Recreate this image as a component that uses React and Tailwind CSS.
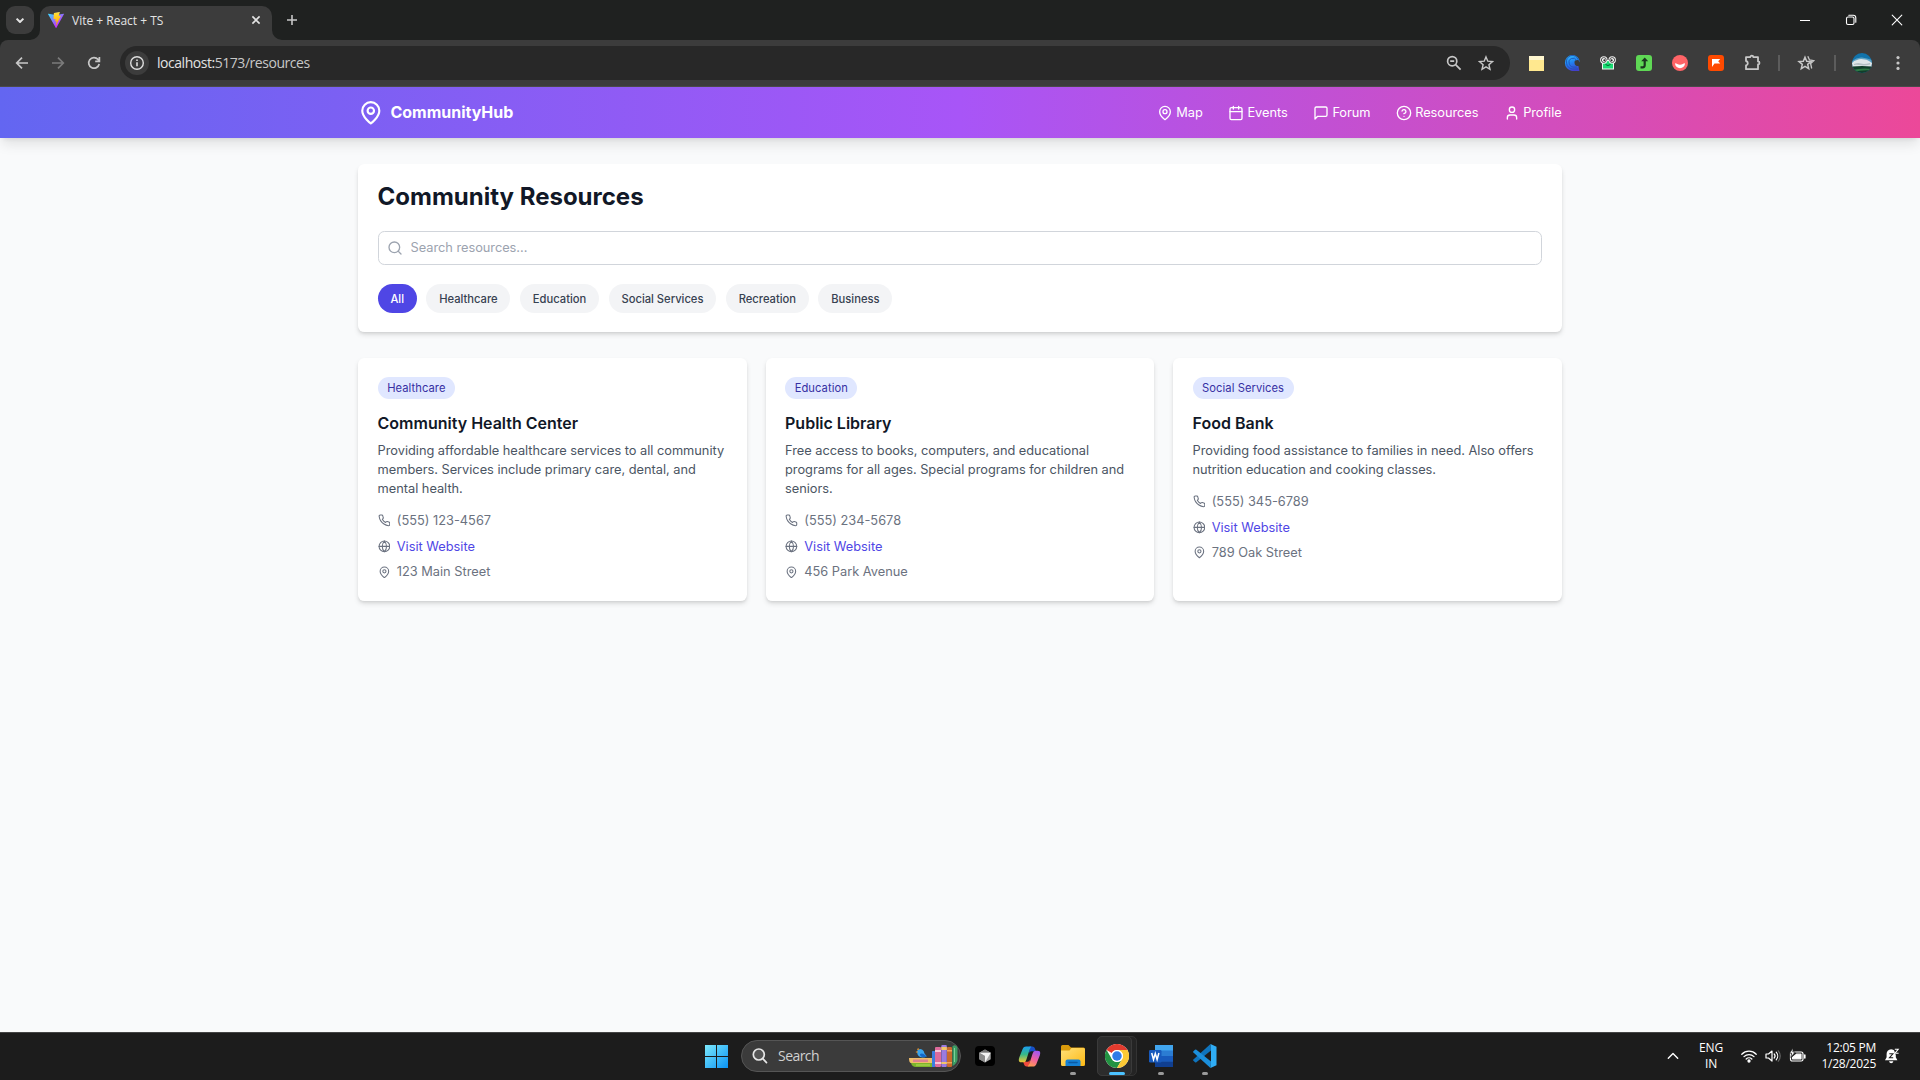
import React from "react";

const Svg = ({ className, children, sw = 2, vb = "0 0 24 24" }) => (
  <svg
    className={className}
    viewBox={vb}
    fill="none"
    stroke="currentColor"
    strokeWidth={sw}
    strokeLinecap="round"
    strokeLinejoin="round"
  >
    {children}
  </svg>
);

const MapPin = ({ className }) => (
  <Svg className={className}>
    <path d="M20 10c0 6-8 12-8 12s-8-6-8-12a8 8 0 0 1 16 0Z" />
    <circle cx="12" cy="10" r="3" />
  </Svg>
);
const Calendar = ({ className }) => (
  <Svg className={className}>
    <rect width="18" height="18" x="3" y="4" rx="2" />
    <path d="M8 2v4M16 2v4M3 10h18" />
  </Svg>
);
const Message = ({ className }) => (
  <Svg className={className}>
    <path d="M21 15a2 2 0 0 1-2 2H7l-4 4V5a2 2 0 0 1 2-2h14a2 2 0 0 1 2 2z" />
  </Svg>
);
const Help = ({ className }) => (
  <Svg className={className}>
    <circle cx="12" cy="12" r="10" />
    <path d="M9.09 9a3 3 0 0 1 5.83 1c0 2-3 3-3 3M12 17h.01" />
  </Svg>
);
const User = ({ className }) => (
  <Svg className={className}>
    <path d="M19 21v-2a4 4 0 0 0-4-4H9a4 4 0 0 0-4 4v2" />
    <circle cx="12" cy="7" r="4" />
  </Svg>
);
const SearchIcon = ({ className }) => (
  <Svg className={className}>
    <circle cx="11" cy="11" r="8" />
    <path d="m21 21-4.3-4.3" />
  </Svg>
);
const Phone = ({ className }) => (
  <Svg className={className}>
    <path d="M22 16.92v3a2 2 0 0 1-2.18 2 19.79 19.79 0 0 1-8.63-3.07 19.5 19.5 0 0 1-6-6 19.79 19.79 0 0 1-3.07-8.67A2 2 0 0 1 4.11 2h3a2 2 0 0 1 2 1.72 12.84 12.84 0 0 0 .7 2.81 2 2 0 0 1-.45 2.11L8.09 9.91a16 16 0 0 0 6 6l1.27-1.27a2 2 0 0 1 2.11-.45 12.84 12.84 0 0 0 2.81.7A2 2 0 0 1 22 16.92z" />
  </Svg>
);
const Globe = ({ className }) => (
  <Svg className={className}>
    <circle cx="12" cy="12" r="10" />
    <path d="M12 2a14.5 14.5 0 0 0 0 20 14.5 14.5 0 0 0 0-20M2 12h20" />
  </Svg>
);

/* ---------- Browser chrome ---------- */

const Vite = () => (
  <svg className="h-4 w-4" viewBox="0 0 256 257">
    <defs>
      <linearGradient id="va" x1="0%" x2="60%" y1="8%" y2="79%">
        <stop offset="0" stopColor="#41D1FF" />
        <stop offset="1" stopColor="#BD34FE" />
      </linearGradient>
      <linearGradient id="vb" x1="43%" x2="50%" y1="2%" y2="89%">
        <stop offset="0" stopColor="#FFEA83" />
        <stop offset=".08" stopColor="#FFDD35" />
        <stop offset="1" stopColor="#FFA800" />
      </linearGradient>
    </defs>
    <path fill="url(#va)" d="M255.153 37.938 134.897 252.976c-2.483 4.44-8.862 4.466-11.382.048L.875 37.958c-2.746-4.814 1.371-10.646 6.827-9.67l120.385 21.517a6.537 6.537 0 0 0 2.322-.004l117.867-21.483c5.438-.991 9.574 4.796 6.877 9.62Z" />
    <path fill="url(#vb)" d="M185.432.063 96.44 17.501a3.268 3.268 0 0 0-2.634 3.014l-5.474 92.456a3.268 3.268 0 0 0 3.997 3.378l24.777-5.718c2.318-.535 4.413 1.507 3.936 3.838l-7.361 36.047c-.495 2.426 1.782 4.5 4.151 3.78l15.304-4.649c2.372-.72 4.652 1.36 4.15 3.788l-11.698 56.621c-.732 3.542 3.979 5.473 5.943 2.437l1.313-2.028 72.516-144.72c1.215-2.423-.88-5.186-3.54-4.672l-25.505 4.922c-2.396.462-4.435-1.77-3.759-4.114l16.646-57.705c.677-2.35-1.37-4.583-3.769-4.113Z" />
  </svg>
);

const TabStrip = () => (
  <div className="flex h-10 w-full items-start bg-[#1f2120] pl-1.5">
    <div className="mt-1.5 flex h-7 w-7 items-center justify-center rounded-[9px] bg-[#3c3c3c] text-[#e3e3e3]">
      <Svg className="h-4 w-4" sw={2} vb="0 0 16 16">
        <path d="M4.6 6.6 8 10l3.4-3.4" strokeLinecap="butt" />
      </Svg>
    </div>
    <div className="relative ml-1.5 mt-1.5 flex h-[34px] w-[232px] items-start rounded-t-[10px] bg-[#3c3c3c] pl-2 pt-1.5">
      <svg className="absolute -left-2.5 bottom-0 h-2.5 w-2.5" viewBox="0 0 10 10">
        <path d="M10 0v10H0A10 10 0 0 0 10 0Z" fill="#3c3c3c" />
      </svg>
      <svg className="absolute -right-2.5 bottom-0 h-2.5 w-2.5" viewBox="0 0 10 10">
        <path d="M0 0v10h10A10 10 0 0 1 0 0Z" fill="#3c3c3c" />
      </svg>
      <Vite />
      <span className="ml-2 mt-px text-[12px] leading-4 text-[#e3e3e3]">Vite + React + TS</span>
      <Svg className="ml-auto mr-2 h-4 w-4 text-[#e3e3e3]" sw={1.6} vb="0 0 16 16">
        <path d="m4.4 4.4 7.2 7.2M11.6 4.4l-7.2 7.2" strokeLinecap="butt" />
      </Svg>
    </div>
    <Svg className="ml-3 mt-3 h-4 w-4 text-[#c7c7c7]" sw={1.6} vb="0 0 16 16">
      <path d="M8 3v10M3 8h10" strokeLinecap="butt" />
    </Svg>
    <div className="ml-auto flex h-10 text-white">
      <div className="flex w-[46px] items-center justify-center">
        <div className="mt-px h-px w-2.5 bg-white" />
      </div>
      <div className="flex w-[46px] items-center justify-center">
        <Svg className="h-3 w-3" sw={1.1} vb="0 0 12 12">
          <rect x="1.5" y="3" width="7.5" height="7.5" rx="1.5" />
          <path d="M3.8 1.2h4.4a2.6 2.6 0 0 1 2.6 2.6v4.4" />
        </Svg>
      </div>
      <div className="flex w-[46px] items-center justify-center">
        <Svg className="h-3 w-3" sw={1.1} vb="0 0 12 12">
          <path d="m1.2 1.2 9.6 9.6M10.8 1.2l-9.6 9.6" />
        </Svg>
      </div>
    </div>
  </div>
);

const Cell = ({ children }) => <div className="flex w-9 items-center justify-center">{children}</div>;

const Extensions = () => (
  <>
    <Cell>
      <div className="h-[15px] w-[15px] border-t-4 border-[#fff7cf] bg-[#ffe88f]" />
    </Cell>
    <Cell>
      <svg className="h-4 w-4" viewBox="0 0 16 16">
        <defs>
          <linearGradient id="wv" x1=".2" y1="0" x2=".5" y2="1">
            <stop offset="0" stopColor="#35bdf8" />
            <stop offset=".5" stopColor="#2183f2" />
            <stop offset="1" stopColor="#4340cc" />
          </linearGradient>
        </defs>
        <path d="M8 0a8 8 0 0 1 8 7.2c-2-1-4.2-.6-4.6.9-.4 1.4.8 2.600 3 2.900l1 4.900H8A8 8 0 0 1 8 0Z" fill="url(#wv)" />
        <path d="M10.500 8A2 2 0 0 1 15.800 7.200Q16 9.500 14.400 11q-3.400.5-3.900-3Z" fill="#3c3c3c" />
        <path d="M14.300 4.800A6 6 0 0 0 2.600 8.200c.2 3 2.600 5.600 6 5.800h5.600M12.600 5.300A4 4 0 0 0 5.200 8.200c.2 2 1.800 3.800 4.200 3.900h3.400" fill="none" stroke="#1c55b8" strokeWidth=".9" />
      </svg>
    </Cell>
    <Cell>
      <svg className="h-4 w-4" viewBox="0 0 16 16">
        <path d="M2 5h12v9.500H2z" fill="#eaf7ee" />
        <path d="M3 6h10v7.500H3z" fill="#18dc72" />
        <circle cx="3.8" cy="5" r="3.7" fill="#f2f2f2" />
        <circle cx="12.2" cy="5" r="3.7" fill="#f2f2f2" />
        <circle cx="3.8" cy="5" r="2.4" fill="#fff" stroke="#3a3a3a" strokeWidth=".9" />
        <circle cx="12.2" cy="5" r="2.4" fill="#fff" stroke="#3a3a3a" strokeWidth=".9" />
        <circle cx="4.3" cy="5.2" r="1" fill="#222" />
        <circle cx="11.7" cy="5.2" r="1" fill="#222" />
        <path d="M5.5 9.5q2.5 2 5 0" fill="none" stroke="#075c30" strokeWidth="1" />
      </svg>
    </Cell>
    <Cell>
      <svg className="h-4 w-4" viewBox="0 0 16 16">
        <rect width="16" height="16" rx="3" fill="#5fd855" />
        <path d="M4.500 12.300h2.200q2 0 2-2V5" fill="none" stroke="#1d3420" strokeWidth="2.200" />
        <path d="M5.200 6.200 8.700 2.400l3.500 3.800z" fill="#1d3420" />
      </svg>
    </Cell>
    <Cell>
      <svg className="h-4 w-4" viewBox="0 0 16 16">
        <circle cx="8" cy="8" r="8" fill="#ff6467" />
        <path d="M3 8.200q1.500 0 2.200.7 2.800 1.500 5.600 0 .7-.7 2.200-.7a5 5 0 0 1-10 0Z" fill="#fff" />
      </svg>
    </Cell>
    <Cell>
      <svg className="h-4 w-4" viewBox="0 0 16 16">
        <rect width="16" height="16" rx="3" fill="#ff4a00" />
        <path d="M4 4h8.200l-2 2.200 2 2.300H6.500L4 12z" fill="#fff" />
      </svg>
    </Cell>
    <Cell>
      <Svg className="h-[18px] w-[18px] text-[#c7c7c7]" sw={1.8} vb="0 0 18 18">
        <path d="M3 3.100h4.300a1.500 1.500 0 0 1 3 0h4.700v4.300a1.500 1.500 0 0 1 0 3v4.800H3v-3.700a2.300 2.300 0 0 0 0-4.500Z" />
      </Svg>
    </Cell>
  </>
);

const Toolbar = () => (
  <div className="w-full bg-[#1f2120]">
    <div className="flex h-[47px] w-full items-stretch rounded-t-[8px] border-b border-[#4a4a4a] bg-[#3c3c3c] pl-1 text-[#c7c7c7]">
      <Cell>
        <Svg className="h-4 w-4" sw={1.7} vb="0 0 16 16">
          <path d="M14 8H3M8 2.700 2.700 8 8 13.300" strokeLinecap="butt" strokeLinejoin="miter" />
        </Svg>
      </Cell>
      <Cell>
        <Svg className="h-4 w-4 text-[#7b7b7b]" sw={1.7} vb="0 0 16 16">
          <path d="M2 8h11M8 2.700 13.300 8 8 13.300" strokeLinecap="butt" strokeLinejoin="miter" />
        </Svg>
      </Cell>
      <Cell>
        <Svg className="h-4 w-4" sw={1.7} vb="0 0 16 16">
          <path d="M13.200 9A5.300 5.300 0 1 1 12 4.400l1.300 1.400M13.400 2v4.300H9.200" strokeLinecap="butt" strokeLinejoin="miter" />
        </Svg>
      </Cell>
      <div className="ml-2 mt-1.5 flex h-[34px] w-[1390px] items-center rounded-full bg-[#282828] pl-[5px] pr-2">
        <div className="flex h-6 w-6 items-center justify-center rounded-full bg-[#3c3c3c] text-[#dedede]">
          <Svg className="h-4 w-4" sw={1.4} vb="0 0 16 16">
            <circle cx="8" cy="8" r="6.3" />
            <path d="M8 7.200v4M8 4.600v1.500" strokeLinecap="butt" strokeWidth="1.6" />
          </Svg>
        </div>
        <span className="ml-2 text-[14px] leading-5 tracking-[-0.46px] text-[#e3e3e3]">
          localhost:<span className="text-[#c7c7c7]">5173/resources</span>
        </span>
        <div className="ml-auto flex">
          <div className="flex w-8 justify-center">
            <Svg className="h-4 w-4" sw={1.7} vb="0 0 16 16">
              <circle cx="6.2" cy="6.2" r="4.6" />
              <path d="m9.600 9.600 5 5M4.200 6.200h4" strokeLinecap="butt" />
            </Svg>
          </div>
          <div className="flex w-8 justify-center">
            <Svg className="h-4 w-4" sw={1.4} vb="0 0 16 16">
              <path d="m8 1.900 1.800 4.300 4.700.4-3.600 3.100 1.100 4.600L8 11.900l-4 2.400 1.100-4.600L1.500 6.600l4.700-.4Z" strokeLinejoin="miter" />
            </Svg>
          </div>
        </div>
      </div>
      <div className="ml-2 flex">
        <Extensions />
      </div>
      <div className="flex w-[18px] items-center justify-center">
        <div className="h-4 w-0.5 bg-[#5c5c5c]" />
      </div>
      <Cell>
        <Svg className="h-[18px] w-[18px]" sw={1.5} vb="0 0 18 18">
          <path d="m8 3.200 1.700 4 4.300.4-3.300 2.800 1 4.300L8 12.400l-3.700 2.300 1-4.300L2 7.600l4.300-.4Z" strokeLinejoin="miter" />
          <path d="m10.800 2.200 1.700 3.700 4.300.7-3.200 2.900 1.100 5" strokeLinecap="butt" strokeLinejoin="miter" strokeWidth="1.3" />
        </Svg>
      </Cell>
      <div className="flex w-[22px] items-center justify-center">
        <div className="h-4 w-0.5 bg-[#5c5c5c]" />
      </div>
      <div className="flex w-8 items-center justify-center">
        <svg className="h-5 w-5" viewBox="0 0 20 20">
          <clipPath id="av">
            <circle cx="10" cy="10" r="10" />
          </clipPath>
          <g clipPath="url(#av)">
            <path fill="#1173ab" d="M0 0h20v20H0z" />
            <path fill="#5fa3c4" d="M0 8q5-4 10-3.500T20 7v4H0z" />
            <path fill="#dfe5e8" d="M0 10q2-2.500 5-3 3-1.500 6-.8 4 .3 6 1.800l3 2v4H0z" />
            <path fill="#b3bec3" d="M2 11q4-1.500 7-.5t9-.5v1.500q-5 1.500-9 .8T2 12z" />
            <path fill="#113d2a" d="M0 13.500q10-1 20 0V20H0z" />
            <path fill="#2f7a45" d="M0 17q10-2.500 20-1v1.500Q10 16.500 2 19z" />
          </g>
        </svg>
      </div>
      <div className="flex w-10 items-center justify-center">
        <svg className="h-4 w-4" viewBox="0 0 16 16" fill="#c7c7c7">
          <circle cx="8" cy="2.6" r="1.6" />
          <circle cx="8" cy="8" r="1.6" />
          <circle cx="8" cy="13.4" r="1.6" />
        </svg>
      </div>
    </div>
  </div>
);

/* ---------- Web page ---------- */

const nav = [
  ["Map", MapPin],
  ["Events", Calendar],
  ["Forum", Message],
  ["Resources", Help],
  ["Profile", User],
];

const categories = ["All", "Healthcare", "Education", "Social Services", "Recreation", "Business"];

const resources = [
  {
    category: "Healthcare",
    name: "Community Health Center",
    text: "Providing affordable healthcare services to all community members. Services include primary care, dental, and mental health.",
    phone: "(555) 123-4567",
    address: "123 Main Street",
  },
  {
    category: "Education",
    name: "Public Library",
    text: "Free access to books, computers, and educational programs for all ages. Special programs for children and seniors.",
    phone: "(555) 234-5678",
    address: "456 Park Avenue",
  },
  {
    category: "Social Services",
    name: "Food Bank",
    text: "Providing food assistance to families in need. Also offers nutrition education and cooking classes.",
    phone: "(555) 345-6789",
    address: "789 Oak Street",
  },
];

const Header = () => (
  <header className="bg-[linear-gradient(to_right,#6366f1,#a855f7,#ec4899)] text-white shadow-lg">
    <div className="mx-auto flex h-16 max-w-[1536px] items-center justify-between px-4">
      <div className="flex items-center gap-2">
        <MapPin className="h-8 w-8" />
        <span className="text-xl font-bold">CommunityHub</span>
      </div>
      <nav className="flex gap-8 tracking-[-0.07px]">
        {nav.map(([label, Icon]) => (
          <a key={label} className="flex items-center gap-1">
            <Icon className="h-5 w-5" />
            <span>{label}</span>
          </a>
        ))}
      </nav>
    </div>
  </header>
);

const ResourceCard = ({ r }) => (
  <div className="rounded-lg bg-white p-6 shadow-md">
    <div className="mb-4 flex">
      <span className="rounded-full bg-[#e0e7ff] px-3 py-1 text-sm tracking-[0.08px] text-[#3730a3]">{r.category}</span>
    </div>
    <h2 className="mb-2 text-xl font-semibold text-[#111827]">{r.name}</h2>
    <p className="mb-4 tracking-[-0.02px] text-[#4b5563]">{r.text}</p>
    <div className="space-y-2 text-[#6b7280]">
      <div className="flex items-center">
        <Phone className="mr-2 h-4 w-4" />
        <span>{r.phone}</span>
      </div>
      <div className="flex items-center">
        <Globe className="mr-2 h-4 w-4" />
        <a className="text-[#4f46e5]">Visit Website</a>
      </div>
      <div className="flex items-center">
        <MapPin className="mr-2 h-4 w-4" />
        <span>{r.address}</span>
      </div>
    </div>
  </div>
);

const Page = () => (
  <div className="min-h-0 flex-1 overflow-hidden bg-[#f9fafb]">
    <div className="[zoom:0.8] font-['Inter',sans-serif]">
      <Header />
      <main className="mx-auto max-w-[1536px] px-4 py-8">
        <section className="mb-8 rounded-lg bg-white p-6 shadow-md">
          <h1 className="mb-6 text-3xl font-bold text-[#111827]">Community Resources</h1>
          <div className="relative mb-6">
            <SearchIcon className="absolute left-3 top-1/2 h-5 w-5 -translate-y-1/2 text-[#9ca3af]" />
            <input
              className="block w-full rounded-lg border border-[#d1d5db] py-2 pl-10 pr-4 tracking-[-0.04px] placeholder:text-[#9ca3af]"
              placeholder="Search resources..."
            />
          </div>
          <div className="flex gap-3">
            {categories.map((c, i) => (
              <button
                key={c}
                className={
                  i === 0
                    ? "rounded-full bg-[#4f46e5] px-4 py-2 text-sm font-medium text-white"
                    : "rounded-full bg-[#f3f4f6] px-4 py-2 text-sm font-medium text-[#374151]"
                }
              >
                {c}
              </button>
            ))}
          </div>
        </section>
        <div className="grid grid-cols-3 gap-6">
          {resources.map((r) => (
            <ResourceCard key={r.name} r={r} />
          ))}
        </div>
      </main>
    </div>
  </div>
);

/* ---------- Taskbar ---------- */

const Books = () => (
  <svg className="h-[23px] w-[50px]" viewBox="0 0 50 23">
    <path d="M1 13h23v5H3q-2 0-2-5z" fill="#f0bd6a" />
    <path d="M5 14.500h15v2.500H5z" fill="#dc8291" />
    <path d="M3 18h21v4H8q-4 0-5-4z" fill="#7db52c" />
    <path d="M8 19.500h14v1H8z" fill="#b7db58" />
    <path d="M9 6q2-3 5-1.500 2 1 2.500 4l2 2.500q-1 1.500-4 1.500Q9 12 9 6z" fill="#3aa5ee" />
    <path d="M12 9q3-2 7 3h-4q-3 0-3-3z" fill="#1668c8" />
    <path d="m9 5 1-2 1.500 1.500M7.500 7 9.500 6v2z" fill="#f39a2b" />
    <rect x="24" y="6" width="3" height="16" rx=".5" fill="#3b7de0" />
    <rect x="27" y="2" width="6" height="20" rx="1" fill="#dd6b9b" />
    <path d="M27 5h6v2h-6zM27 17h6v2h-6z" fill="#f6c4d6" />
    <rect x="33.3" y="0" width="5.500" height="22" rx="1" fill="#9b7be0" />
    <path d="M33.300 2h5.500v3h-5.500zM33.300 17h5.500v2h-5.500z" fill="#f2c46a" />
    <rect x="39" y="2" width="5" height="20" rx="1" fill="#c9692c" />
    <path d="M39 5h5v1.500h-5zM39 17h5v1.500h-5z" fill="#f0a45c" />
    <path d="M44.500 1q4-2 5 2v12q-1 4-5 6z" fill="#3d9e63" />
    <path d="M46.500 3v14" stroke="#7fd09a" strokeWidth="1" />
  </svg>
);

const Running = ({ children }) => (
  <div className="relative flex h-12 w-11 items-center justify-center">
    {children}
    <div className="absolute bottom-[5px] left-[19px] h-[3px] w-1.5 rounded-full bg-[#9a9a9a]" />
  </div>
);

const Taskbar = () => (
  <div className="flex h-12 w-full items-stretch border-t border-[#444444] bg-[#1c1c1c] pb-px text-white">
    <div className="flex w-[1650px] items-center pl-[705px]">
      <svg className="h-[23px] w-[23px]" viewBox="0 0 23 23">
        <defs>
          <linearGradient id="win" x1="0" y1="0" x2="23" y2="23" gradientUnits="userSpaceOnUse">
            <stop offset="0" stopColor="#7be8fb" />
            <stop offset="1" stopColor="#0a93f5" />
          </linearGradient>
        </defs>
        <path fill="url(#win)" d="M0 0h11v11H0zM12 0h11v11H12zM0 12h11v11H0zM12 12h11v11H12z" />
      </svg>
      <div className="ml-[13px] flex h-8 w-[220px] items-center rounded-full border border-[#555555] bg-[#3b3b3b] pl-[10px] pr-[2px]">
        <Svg className="h-4 w-4 text-[#e6e6e6]" sw={1.7} vb="0 0 16 16">
          <circle cx="6.8" cy="6.500" r="5.500" fill="#555" />
          <path d="m10.800 10.700 3.700 3.900" />
        </Svg>
        <span className="ml-[10px] text-[14px] leading-5 tracking-[-0.55px] text-[#d0d0d0]">Search</span>
        <div className="ml-auto mt-px">
          <Books />
        </div>
      </div>
      <div className="ml-[2px] flex items-center">
        <div className="flex w-11 justify-center">
          <svg className="h-5 w-5" viewBox="0 0 20 20">
            <rect width="20" height="20" rx="4" fill="#000" />
            <path d="m10 3.500 5.700 3.200v6.500L10 16.500l-5.700-3.300V6.700z" fill="#a8a8a8" />
            <path d="m4.300 6.700 5.700-3.200 5.700 3.200z" fill="#777" />
            <path d="M4.300 6.700h11.400L10 16.500V10z" fill="#f4f4f4" />
            <path d="M4.300 6.700 10 10v6.500l-5.700-3.300z" fill="#8b8b8b" />
          </svg>
        </div>
        <div className="flex w-11 justify-center">
          <svg className="h-[23px] w-[23px]" viewBox="0 0 24 24">
            <defs>
              <linearGradient id="c1" x1="0" y1="0" x2="0" y2="1">
                <stop offset="0" stopColor="#1b9df0" />
                <stop offset=".5" stopColor="#35b98a" />
                <stop offset="1" stopColor="#f5c832" />
              </linearGradient>
              <linearGradient id="c2" x1=".6" y1="0" x2=".2" y2="1">
                <stop offset="0" stopColor="#a557ee" />
                <stop offset=".5" stopColor="#f0609e" />
                <stop offset="1" stopColor="#ff9f4b" />
              </linearGradient>
            </defs>
            <path d="M12 1.500h3q2 0 2.800 2.500l.7 2.500H14q-2 0-2.500 2z" fill="#174fc7" />
            <path d="M12 22.500H9q-2 0-2.800-2.500l-.7-2.500H10q2 0 2.500-2z" fill="#ef4a3b" />
            <path d="M14 1.500H8.500q-3 0-4 3.500L1.300 13q-1.600 5 2.200 5H6q2 0 2.800-3L12 5q.8-2 2-3.500z" fill="url(#c1)" />
            <path d="M10 22.500h5.500q3 0 4-3.500l3.200-8q1.600-5-2.200-5H18q-2 0-2.800 3L12 19q-.8 2-2 3.500z" fill="url(#c2)" />
          </svg>
        </div>
        <Running>
          <svg className="h-6 w-6" viewBox="0 0 24 24">
            <defs>
              <linearGradient id="fo" x1="0" y1="0" x2="1" y2="1">
                <stop offset="0" stopColor="#ffe07a" />
                <stop offset="1" stopColor="#fdb913" />
              </linearGradient>
            </defs>
            <path d="M0 2.500Q0 1 1.500 1h6L10 3.500h12.500Q24 3.500 24 5v4H0z" fill="#d99a0b" />
            <path d="M0 6.500h8.500l2-2.500H22.500Q24 4 24 5.500v15q0 1.500-1.500 1.500h-21Q0 22 0 20.500z" fill="url(#fo)" />
            <path d="M4.500 22v-4.500q0-2 2-2h11q2 0 2 2V22z" fill="#1580d4" />
            <path d="M8 18.500h8" stroke="#0b5aa5" strokeWidth="1.500" strokeLinecap="round" />
          </svg>
        </Running>
        <div className="relative flex h-12 w-11 items-center justify-center">
          <div className="absolute left-[2px] top-1 h-10 w-10 rounded-[5px] border border-[#333333] bg-[#242424]" />
          <div className="absolute left-[2px] top-1 h-10 w-[35px] rounded-[5px] border border-[#3a3a3a] bg-[#2c2c2c]" />
          <svg className="relative h-6 w-6" viewBox="0 0 48 48">
            <circle cx="24" cy="24" r="24" fill="#fff" />
            <path d="M3.200 12A24 24 0 0 1 44.800 12H24a12 12 0 0 0-10.400 6z" fill="#e33b2e" />
            <path d="M3.200 12A24 24 0 0 0 24 48l10.400-18A12 12 0 0 1 13.600 30z" fill="#229342" />
            <path d="M44.800 12A24 24 0 0 1 24 48l10.400-18A12 12 0 0 0 24 12z" fill="#fcc934" />
            <circle cx="24" cy="24" r="12" fill="#fff" />
            <circle cx="24" cy="24" r="9.500" fill="#2f7be8" />
          </svg>
          <div className="absolute bottom-[5px] left-3.5 h-[3px] w-4 rounded-full bg-[#4cc2ff]" />
        </div>
        <Running>
          <svg className="h-6 w-6" viewBox="0 0 24 24">
            <rect x="6" y="1" width="18" height="22" rx="1.500" fill="#2b7cd3" />
            <path d="M6 1h18v5.500H6z" fill="#41a5ee" />
            <path d="M6 12h18v5.500H6z" fill="#185abd" />
            <path d="M6 17.500h18V23H6z" fill="#103f91" />
            <rect y="6" width="12.500" height="12.500" rx="1.200" fill="#185abd" />
            <path d="m2.700 9 1.800 6.500L6.300 9.500l1.800 6L9.900 9" fill="none" stroke="#fff" strokeWidth="1.500" />
          </svg>
        </Running>
        <Running>
          <svg className="h-6 w-6" viewBox="0 0 24 24">
            <path d="M17.500 0 .4 15.500q-.6.700 0 1.300l1.600 1.500q.7.500 1.400 0L18 6.500z" fill="#0f74bd" />
            <path d="M17.500 24 .4 8.500q-.6-.7 0-1.300L2 5.700q.7-.5 1.400 0L18 17.500z" fill="#1b8fdc" />
            <path d="M17.500 0 18 6.500v11l-.5 6.500 6-2.800V2.800z" fill="#2fadf5" />
          </svg>
        </Running>
      </div>
    </div>
    <div className="flex flex-1 items-center text-[12px] leading-4">
      <Svg className="ml-[17px] h-3 w-3" sw={1.4} vb="0 0 12 12">
        <path d="M1.300 8.300 6 3.600l4.700 4.700" />
      </Svg>
      <div className="ml-4 w-[32px] text-center tracking-[-0.2px]">
        <div>ENG</div>
        <div>IN</div>
      </div>
      <Svg className="ml-3.5 h-4 w-4" sw={1.3} vb="0 0 16 16">
        <path d="M.8 6.200a10.200 10.200 0 0 1 14.400 0M3 8.600a7.100 7.100 0 0 1 10 0M5.200 11a4 4 0 0 1 5.600 0" />
        <circle cx="8" cy="13" r="1" fill="currentColor" />
      </Svg>
      <Svg className="ml-2 h-4 w-4" sw={1.2} vb="0 0 16 16">
        <path d="M1 6v4h2.500L7 13V3L3.500 6z" />
        <path d="M9.200 6a3 3 0 0 1 0 4M11.200 4.200a5.600 5.600 0 0 1 0 7.600" />
        <path d="M13.300 2.800a8 8 0 0 1 0 10.400" stroke="#666" />
      </Svg>
      <Svg className="ml-2 h-4 w-[17px]" sw={1.2} vb="0 0 17 16">
        <rect x="1.500" y="4" width="12.500" height="9" rx="1.8" />
        <path d="M7.500 6.200h4.500v4.600H3.600V9.500z" fill="currentColor" />
        <path d="M15.800 7v3" strokeWidth="1.6" />
        <path d="M3.800.3.600 5.200h2l-.8 4.300 4.400-5.500H4.200z" fill="#fff" stroke="#1c1c1c" strokeWidth=".7" />
      </Svg>
      <div className="ml-[10px] w-[60px] whitespace-nowrap text-right tracking-[-0.25px]">
        <div>12:05 PM</div>
        <div>1/28/2025</div>
      </div>
      <svg className="ml-[8px] h-4 w-4" viewBox="0 0 16 16">
        <path d="M7.200 1.300C4.200 1.300 2.600 3.500 2.600 6v3.300L1 12.300h12.400L11.800 9.300V6c0-2.500-1.600-4.700-4.600-4.700z" fill="#fff" />
        <path d="M5 13.300h4.400q-.5 2-2.200 2t-2.200-2z" fill="#fff" />
        <path d="M5.300 5.800h3.600L5.500 9.700h3.700" fill="none" stroke="#1c1c1c" strokeWidth="1.1" />
        <path d="M10 0h6v6.300h-5z" fill="#1c1c1c" />
        <path d="M10.800 1.300h3.400L11 5.200h3.600" fill="none" stroke="#fff" strokeWidth="1.1" />
      </svg>
    </div>
  </div>
);

export default function App() {
  return (
    <div className="flex h-[1080px] w-[1920px] flex-col overflow-hidden font-['Segoe_UI','Open_Sans','Noto_Sans',sans-serif]">
      <TabStrip />
      <Toolbar />
      <Page />
      <Taskbar />
    </div>
  );
}
